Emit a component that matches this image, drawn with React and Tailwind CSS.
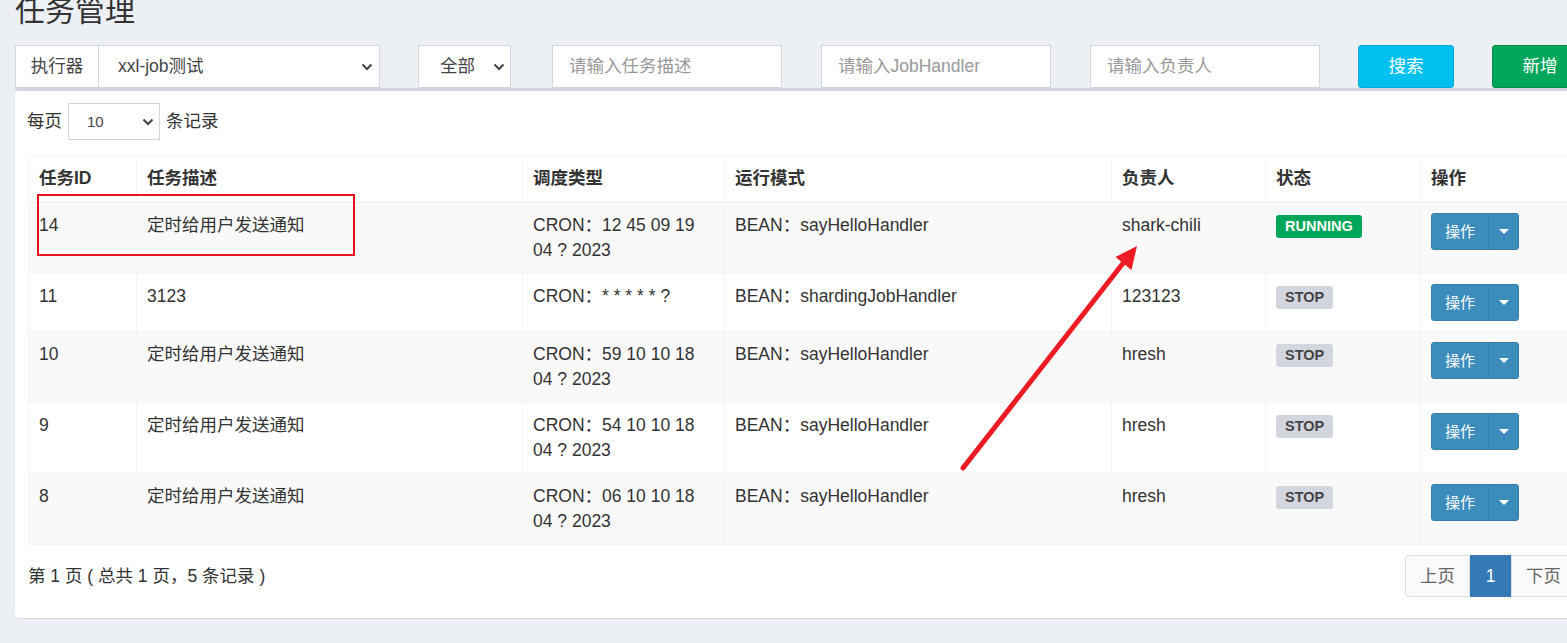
import React from "react";

const Chevron = () => (
  <svg width="12" height="8" viewBox="0 0 12 8" className="shrink-0">
    <path d="M1.5 1.5 L6 6 L10.5 1.5" fill="none" stroke="#444" strokeWidth="2" />
  </svg>
);

const Caret = () => (
  <svg width="10" height="5" viewBox="0 0 10 5">
    <path d="M0 0 L10 0 L5 5Z" fill="#fff" />
  </svg>
);

const rows = [
  { id: "14", desc: "定时给用户发送通知", cron: ["CRON：12 45 09 19", "04 ? 2023"], mode: "BEAN：sayHelloHandler", owner: "shark-chili", running: true },
  { id: "11", desc: "3123", cron: ["CRON：* * * * * ?"], mode: "BEAN：shardingJobHandler", owner: "123123", running: false },
  { id: "10", desc: "定时给用户发送通知", cron: ["CRON：59 10 10 18", "04 ? 2023"], mode: "BEAN：sayHelloHandler", owner: "hresh", running: false },
  { id: "9", desc: "定时给用户发送通知", cron: ["CRON：54 10 10 18", "04 ? 2023"], mode: "BEAN：sayHelloHandler", owner: "hresh", running: false },
  { id: "8", desc: "定时给用户发送通知", cron: ["CRON：06 10 10 18", "04 ? 2023"], mode: "BEAN：sayHelloHandler", owner: "hresh", running: false },
];

const td = "border border-[#f4f4f4] p-[10px] align-top text-left";

export default function App() {
  return (
    <div className="relative w-[1567px] h-[643px] overflow-hidden bg-[#ecf0f5] font-['Liberation_Sans','Noto_Sans_CJK_SC',sans-serif] text-[17.5px] leading-[25px] text-[#333]">
      <div className="pl-[15px]">
        <h1 className="-mt-[6px] h-[33px] text-[30px] leading-[33px] font-normal text-[#333]">任务管理</h1>

        {/* filter row */}
        <div className="mt-[18px] flex h-[43px] items-stretch">
          <div className="flex w-[365px] shrink-0">
            <div className="flex w-[84px] shrink-0 items-center justify-center border border-[#d2d6de] bg-white text-[#444]">执行器</div>
            <div className="flex flex-1 items-center justify-between border border-l-0 border-[#d2d6de] bg-white pl-[19px] pr-[6px] text-[#444]">
              <span>xxl-job测试</span>
              <Chevron />
            </div>
          </div>
          <div className="ml-[38px] flex w-[93px] shrink-0 items-center justify-between border border-[#d2d6de] bg-white pl-[21px] pr-[5px] text-[#444]">
            <span>全部</span>
            <Chevron />
          </div>
          <div className="ml-[41px] flex w-[230px] shrink-0 items-center border border-[#d2d6de] bg-white pl-[16px] text-[#999]">请输入任务描述</div>
          <div className="ml-[39px] flex w-[230px] shrink-0 items-center border border-[#d2d6de] bg-white pl-[16px] text-[#999]">请输入JobHandler</div>
          <div className="ml-[39px] flex w-[230px] shrink-0 items-center border border-[#d2d6de] bg-white pl-[16px] text-[#999]">请输入负责人</div>
          <div className="ml-[38px] flex w-[96px] shrink-0 items-center justify-center rounded-[3px] border border-[#00acd6] bg-[#00c0ef] text-white">搜索</div>
          <div className="ml-[38px] flex w-[96px] shrink-0 items-center justify-center rounded-[3px] border border-[#008d4c] bg-[#00a65a] text-white">新增</div>
        </div>

        {/* box */}
        <div className="w-[1574px] rounded-[3px] border-t-[3px] border-[#d2d6de] bg-white px-[13px] pt-[12px] pb-[21px] shadow-[0_1px_1px_rgba(0,0,0,0.1)]">
          <div className="flex h-[37px] items-center">
            <span className="-ml-[1px]">每页</span>
            <div className="ml-[6px] flex h-[37px] w-[92px] items-center justify-between border border-[#d2d6de] bg-white pl-[18px] pr-[5px] text-[15px] text-[#444]">
              <span>10</span>
              <Chevron />
            </div>
            <span className="ml-[6px]">条记录</span>
          </div>

          <table className="mt-[15px] w-[1548px] table-fixed border-collapse">
            <colgroup>
              <col className="w-[108px]" />
              <col className="w-[386px]" />
              <col className="w-[202px]" />
              <col className="w-[387px]" />
              <col className="w-[154px]" />
              <col className="w-[155px]" />
              <col className="w-[156px]" />
            </colgroup>
            <thead>
              <tr>
                {["任务ID", "任务描述", "调度类型", "运行模式", "负责人", "状态", "操作"].map((h) => (
                  <th key={h} className="border border-b-2 border-[#f4f4f4] p-[10px] text-left font-bold">{h}</th>
                ))}
              </tr>
            </thead>
            <tbody>
              {rows.map((r, i) => (
                <tr key={r.id} className={i % 2 === 0 ? "bg-[#f9f9f9]" : "bg-white"}>
                  <td className={td}>{r.id}</td>
                  <td className={td}>{r.desc}</td>
                  <td className={td}>
                    {r.cron.map((c) => (
                      <div key={c}>{c}</div>
                    ))}
                  </td>
                  <td className={td}>{r.mode}</td>
                  <td className={td}>{r.owner}</td>
                  <td className={td}>
                    <div>
                      {r.running ? (
                        <span className="inline-flex h-[23px] items-center rounded-[3px] bg-[#00a65a] px-[9px] text-[14.5px] font-bold text-white">RUNNING</span>
                      ) : (
                        <span className="inline-flex h-[23px] items-center rounded-[3px] bg-[#d2d6de] px-[9px] text-[14.5px] font-bold text-[#444]">STOP</span>
                      )}
                    </div>
                  </td>
                  <td className={td}>
                    <div className="flex h-[37px] w-[88px] rounded-[3px] border border-[#367fa9] bg-[#3c8dbc] text-[15px] text-white">
                      <div className="flex w-[56px] items-center justify-center">操作</div>
                      <div className="flex flex-1 items-center justify-center border-l border-[#367fa9]">
                        <Caret />
                      </div>
                    </div>
                  </td>
                </tr>
              ))}
            </tbody>
          </table>

          <div className="mt-[10px] flex w-[1548px] items-center justify-between">
            <span>第 1 页 ( 总共 1 页，5 条记录 )</span>
            <div className="flex h-[42px]">
              <div className="flex w-[65px] items-center justify-center rounded-l-[4px] border border-[#ddd] bg-[#fafafa] text-[#666]">上页</div>
              <div className="flex w-[41px] items-center justify-center border border-[#337ab7] bg-[#337ab7] text-white">1</div>
              <div className="flex w-[65px] items-center justify-center rounded-r-[4px] border border-[#ddd] bg-[#fafafa] text-[#666]">下页</div>
            </div>
          </div>
        </div>
      </div>

      {/* annotations */}
      <div className="absolute left-[37px] top-[194px] h-[62px] w-[318px] border-2 border-[#e8101e]" />
      <svg className="pointer-events-none absolute left-0 top-0" width="1567" height="643">
        <line x1="963" y1="468" x2="1124" y2="262" stroke="#ed1c24" strokeWidth="5" strokeLinecap="round" />
        <polygon points="1137,246 1115.5,257 1131.5,270" fill="#ed1c24" />
      </svg>
    </div>
  );
}
